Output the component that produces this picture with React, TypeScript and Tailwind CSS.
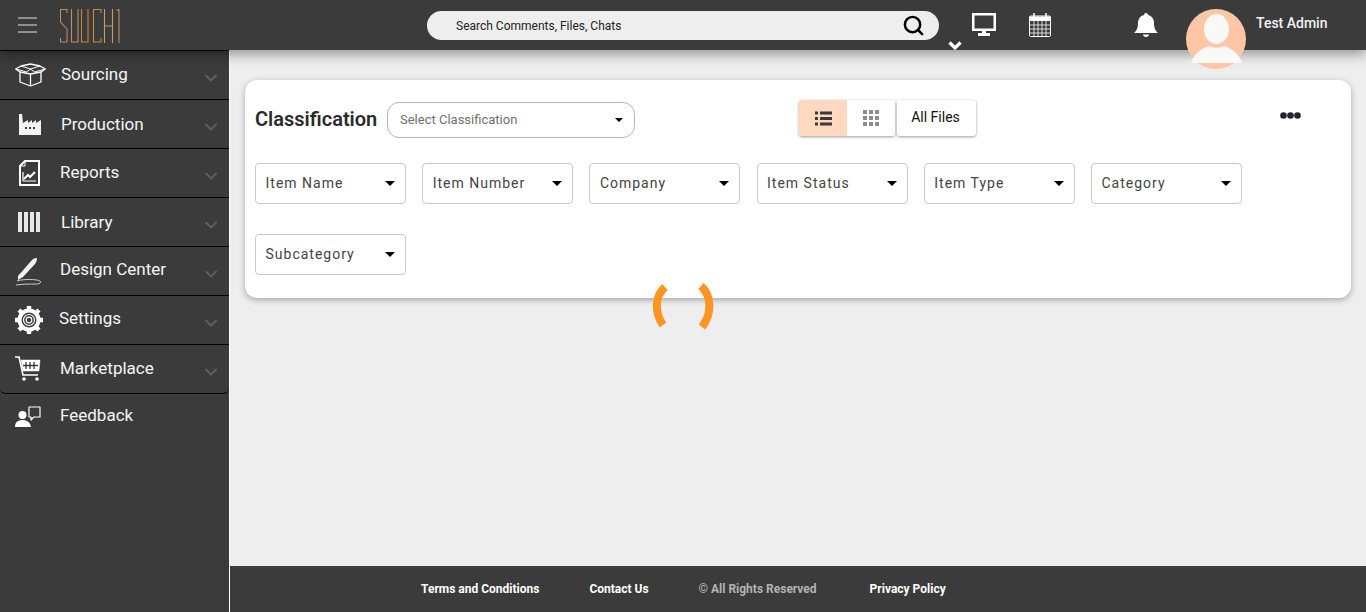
import { FC, ReactNode } from "react";
import { ChevronDown, Search } from "lucide-react";

type TNavItem = {
  label: string;
  icon: ReactNode;
  slot: string;
  text: string;
};

const BoxIcon = () => (
  <svg width="31" height="24" viewBox="0 0 31 24" fill="none" stroke="#fff" strokeWidth="1.3" strokeLinejoin="round">
    <path d="M5 9v10l10.500 4L26 19V9" />
    <path d="M15.500 11v12M5 9l10.500 2L26 9" />
    <path d="M5 9 .7 6 6 3 15.500 1 25 3l5.300 3L26 9" />
    <path d="M.7 6l10.800 3 4-3 4 3 10.800-3M6 3l9.500 3L25 3" strokeWidth="1" />
  </svg>
);

const FactoryIcon = () => (
  <svg width="22" height="21" viewBox="0 0 22 21" fill="#f2f2f2">
    <path d="M0 21V0h3l1 9 5-3v3l4-3v3l4-3v3l5-3v15z" />
    <g fill="#3b3b3b">
      <rect x="6" y="13" width="2" height="2" />
      <rect x="10" y="13" width="2" height="2" />
      <rect x="14" y="13" width="2" height="2" />
    </g>
  </svg>
);

const ReportIcon = () => (
  <svg width="21" height="26" viewBox="0 0 21 26" fill="none" stroke="#fff">
    <path d="M6 1h14v24H1V6z" strokeWidth="2" />
    <path d="M6 1v5H1" strokeWidth="1" />
    <path d="M4 21h13M4 21V12" strokeWidth="1.2" />
    <path d="M5 19l4-4 2 2 5-5" strokeWidth="2" />
  </svg>
);

const BarsIcon = () => (
  <svg width="22" height="20" viewBox="0 0 22 20" fill="#e8e8e8">
    <rect x="0" y="0" width="4" height="20" />
    <rect x="6" y="0" width="4" height="20" />
    <rect x="12" y="0" width="4" height="20" />
    <rect x="18" y="0" width="4" height="20" />
  </svg>
);

const PenIcon = () => (
  <svg width="27" height="29" viewBox="0 0 27 29" fill="none">
    <path d="M3 19 17 3c2-2 5-3 5-1 0 2-1 3-2 5L8 20l-5 3z" fill="#f2f2f2" />
    <path d="M2 24c5-2 20-2 23 0 2 2-1 3-4 3-6 0-14 0-20 1" stroke="#ddd" strokeWidth="0.9" />
  </svg>
);

const GearIcon = () => (
  <svg width="28" height="28" viewBox="0 0 28 28">
    <circle cx="14" cy="14" r="11.500" fill="#fff" />
    <g stroke="#fff" strokeWidth="4.400">
      <path d="M14 0v28M0 14h28M4 4l20 20M24 4 4 24" />
    </g>
    <circle cx="14" cy="14" r="7.500" fill="#3b3b3b" />
    <circle cx="14" cy="14" r="5.500" fill="none" stroke="#fff" strokeWidth="1.200" />
    <circle cx="14" cy="14" r="2.800" fill="none" stroke="#fff" strokeWidth="1.200" />
  </svg>
);

const CartIcon = () => (
  <svg width="26" height="26" viewBox="0 0 26 26" fill="none" stroke="#fff">
    <path d="M0 1h4l4 18h15" strokeWidth="1.6" />
    <path d="M6 4h19l-1 11H8z" fill="#fff" strokeWidth="0.5" />
    <path d="M11 6v7M15 6v7M19 6v7M8 9.500h15" stroke="#3b3b3b" strokeWidth="1.3" />
    <circle cx="9" cy="23" r="1.800" fill="#fff" strokeWidth="0" />
    <circle cx="22" cy="23" r="1.800" fill="#fff" strokeWidth="0" />
  </svg>
);

const FeedbackIcon = () => (
  <svg width="26" height="21" viewBox="0 0 26 21">
    <circle cx="7.500" cy="9" r="4" fill="#fff" />
    <path d="M0 21c0-5 3-7 7.500-7S15 16 16 21z" fill="#fff" />
    <path d="M14 1h11v10h-6l-3 3v-3h-2z" fill="none" stroke="#fff" strokeWidth="1.2" strokeLinejoin="round" />
  </svg>
);

const navItems: TNavItem[] = [
  { label: "Sourcing", icon: <BoxIcon />, slot: "pl-[15px]", text: "ml-[2px] -mt-[1px]" },
  { label: "Production", icon: <FactoryIcon />, slot: "pl-[19px]", text: "ml-[2px] mt-[1px]" },
  { label: "Reports", icon: <ReportIcon />, slot: "pl-[19px]", text: "ml-[1px]" },
  { label: "Library", icon: <BarsIcon />, slot: "pl-[18px]", text: "ml-[2px] mt-[1px]" },
  { label: "Design Center", icon: <PenIcon />, slot: "pl-[15px]", text: "ml-[1px] -mt-[2px]" },
  { label: "Settings", icon: <GearIcon />, slot: "pl-[15px]", text: "-mt-[2px]" },
  { label: "Marketplace", icon: <CartIcon />, slot: "pl-[15px]", text: "ml-[1px] -mt-[1px]" },
];

const filters: string[] = [
  "Item Name",
  "Item Number",
  "Company",
  "Item Status",
  "Item Type",
  "Category",
  "Subcategory",
];

const Caret = () => (
  <span className="h-0 w-0 border-x-[5px] border-t-[5px] border-x-transparent border-t-black" />
);

const Header: FC = () => (
  <header className="relative z-20 flex h-[50px] items-center bg-[#3b3b3b] shadow-[0_4px_12px_rgba(0,0,0,0.4)]">
    <div className="ml-[18px] flex w-[19px] flex-col gap-[5px]">
      <span className="h-[2px] bg-[#8f8f8f]" />
      <span className="h-[2px] bg-[#8f8f8f]" />
      <span className="h-[2px] bg-[#8f8f8f]" />
    </div>
    {/* logo */}
    <svg className="ml-[23px] mt-[1px]" width="60" height="34" viewBox="0 0 60 34" fill="none" stroke="#c4873f" strokeWidth="1.1">
      <path d="M7 4V.5H.5V13L7 20v13H.5v-4" stroke="#b98d60" />
      <path d="M11.500 0v33H18V0" stroke="#bb9062" />
      <path d="M21.500 0v33H28V0" />
      <path d="M41 4V.5h-7.500v32.500H41v-4" />
      <path d="M44.500 0v34M52.500 0v34M44.500 17h8" stroke="#c99a63" />
      <path d="M56.500 1.500 59 .5V34" stroke="#b98d60" />
    </svg>
    <div className="ml-[307px] flex h-[29px] w-[512px] items-center rounded-full bg-[#eeeeee] pl-[29px] pr-[14px]">
      <span className="mt-[1px] flex-1 text-[12px] text-[#222]">Search Comments, Files, Chats</span>
      <Search className="size-[23px] text-black" strokeWidth={2.6} />
    </div>
    <div className="relative ml-[33px] h-[24px] w-[24px]">
      <svg width="24" height="24" viewBox="0 0 24 24" fill="#fff">
        <path d="M0 0h24v18H14v2h4v3H6v-3h4v-2H0zm2.500 2.500v13h19v-13z" fillRule="evenodd" />
      </svg>
      <svg className="absolute -left-[24px] top-[28px]" width="14" height="10" viewBox="0 0 14 10" fill="none" stroke="#fff" strokeWidth="3.200">
        <path d="M1.500 1.500 7 7l5.500-5.500" />
      </svg>
    </div>
    <svg className="ml-[33px]" width="22" height="24" viewBox="0 0 22 24" fill="none" stroke="#fff">
      <rect x="0.500" y="3" width="21" height="20.500" rx="1" strokeWidth="1" />
      <path d="M0 3.500h22V8H0z" fill="#fff" strokeWidth="0" />
      <path d="M5 0v5M17 0v5" strokeWidth="1.500" />
      <path d="M0.500 12h21M0.500 16h21M0.500 20h21M5 8v15M9 8v15M13 8v15M17 8v15" strokeWidth="0.800" />
    </svg>
    <svg className="ml-[83px]" width="24" height="24" viewBox="0 0 24 24" fill="#fff">
      <path d="M12 0c1.500 0 2 1 2 2 4 1 6 4 6 8 0 5 1 7 4 10H0c3-3 4-5 4-10 0-4 2-7 6-8 0-1 .5-2 2-2z" />
      <path d="M9 21.500h6c0 1.500-1.500 2.500-3 2.500s-3-1-3-2.500z" />
    </svg>
    <svg className="absolute left-[1186px] top-[9px]" width="60" height="60" viewBox="0 0 60 60">
      <circle cx="30" cy="30" r="30" fill="#fdc6a5" />
      <ellipse cx="30.500" cy="20" rx="12.500" ry="15" fill="#fbf9f7" />
      <path d="M5 54c2-8 10-15 18-17 4 2 11 2 15 0 8 2 16 9 18 17z" fill="#fbf9f7" />
    </svg>
    <span className="ml-[98px] -mt-[4px] text-[14px] font-medium text-[#f2f2f2]">Test Admin</span>
  </header>
);

const Sidebar: FC = () => (
  <aside className="w-[229px] shrink-0 bg-[#3b3b3b] text-[#f5f5f5]">
    {navItems.map((item, index) => (
      <div
        key={item.label}
        className={`flex items-center border-t border-black pr-[8px] ${
          index === navItems.length - 1 ? "h-[50px] rounded-b-md border-b" : "h-[49px]"
        }`}
      >
        <div className={`flex w-[59px] shrink-0 items-center ${item.slot}`}>{item.icon}</div>
        <span className={`flex-1 text-[17px] ${item.text}`}>{item.label}</span>
        <ChevronDown className="mt-[5px] size-[20px] text-[#5e5e5e]" strokeWidth={2.4} />
      </div>
    ))}
    <div className="flex h-[44px] items-center">
      <div className="flex w-[59px] shrink-0 items-center pl-[15px]">
        <FeedbackIcon />
      </div>
      <span className="-mt-[1px] ml-[1px] text-[17px]">Feedback</span>
    </div>
  </aside>
);

const ClassificationCard: FC = () => (
  <section className="rounded-xl bg-white pb-[23px] pl-[10px] pt-[20px] shadow-[0_2px_6px_rgba(0,0,0,0.3)]">
    <div className="flex h-[38px] items-center">
      <h2 className="w-[132px] text-[20px] font-semibold text-[#2b2b2b]">Classification</h2>
      <div className="mt-[2px] flex h-[36px] w-[248px] items-center justify-between rounded-xl border border-[#b5b5b5] pl-[12px] pr-[11px]">
        <span className="text-[13px] text-[#6f6f6f]">Select Classification</span>
        <span className="h-0 w-0 border-x-[4px] border-t-[4px] border-x-transparent border-t-black" />
      </div>
      <div className="ml-[164px] -mt-[2px] flex h-[36px] rounded-[3px] shadow-[0_1px_3px_rgba(0,0,0,0.4)]">
        <div className="flex w-[48px] items-center justify-center rounded-l-[3px] bg-[#ffd9bf]">
          <svg width="17" height="15" viewBox="0 0 17 15" fill="#3b3b3b">
            <rect x="0" y="0.500" width="3" height="3" />
            <rect x="5" y="0.500" width="12" height="3" />
            <rect x="0" y="6" width="3" height="3" />
            <rect x="5" y="6" width="12" height="3" />
            <rect x="0" y="11.500" width="3" height="3" />
            <rect x="5" y="11.500" width="12" height="3" />
          </svg>
        </div>
        <div className="flex w-[48px] items-center justify-center rounded-r-[3px] bg-white">
          <svg width="16" height="16" viewBox="0 0 16 16" fill="#8c8c8c">
            <rect x="0" y="0" width="4" height="4" />
            <rect x="6" y="0" width="4" height="4" />
            <rect x="12" y="0" width="4" height="4" />
            <rect x="0" y="6" width="4" height="4" />
            <rect x="6" y="6" width="4" height="4" />
            <rect x="12" y="6" width="4" height="4" />
            <rect x="0" y="12" width="4" height="4" />
            <rect x="6" y="12" width="4" height="4" />
            <rect x="12" y="12" width="4" height="4" />
          </svg>
        </div>
      </div>
      <div className="ml-[2px] -mt-[2px] flex h-[36px] w-[79px] items-center justify-center rounded-[3px] bg-white pb-[2px] pr-[2px] text-[14px] text-[#111] shadow-[0_1px_3px_rgba(0,0,0,0.4)]">
        All Files
      </div>
      <svg className="ml-[304px] -mt-[7px]" width="21" height="9" viewBox="0 0 21 9" fill="#22252e">
        <circle cx="3.500" cy="4.500" r="3.300" />
        <circle cx="10.500" cy="4.500" r="3.300" />
        <circle cx="17.500" cy="4.500" r="3.300" />
      </svg>
    </div>
    <div className="mt-[25px] flex flex-wrap gap-x-[16.200px] gap-y-[30px]">
      {filters.map((filter) => (
        <div
          key={filter}
          className="flex h-[41px] w-[151px] items-center justify-between rounded-[4px] border border-[#c9c9c9] pl-[9.500px] pr-[10px]"
        >
          <span className="text-[14px] tracking-[1px] text-[#444]">{filter}</span>
          <Caret />
        </div>
      ))}
    </div>
  </section>
);

const Footer: FC = () => (
  <footer className="flex h-[46px] items-center bg-[#3b3b3b] pl-[191px] text-[12px] font-bold">
    <span className="text-white">Terms and Conditions</span>
    <span className="ml-[50px] text-white">Contact Us</span>
    <span className="ml-[50px] text-[#b3b3b3]">© All Rights Reserved</span>
    <span className="ml-[53px] text-white">Privacy Policy</span>
  </footer>
);

const App: FC = () => (
  <div className="flex h-[612px] w-[1366px] flex-col overflow-hidden bg-[#eeeeee] font-['Roboto',sans-serif]">
    <Header />
    <div className="flex min-h-0 flex-1">
      <Sidebar />
      <div className="relative flex flex-1 flex-col border-l border-white">
        <main className="flex-1 pl-[15px] pr-[15px] pt-[30px]">
          <ClassificationCard />
        </main>
        <Footer />
        {/* loading spinner */}
        <svg className="absolute left-[422px] top-[233px]" width="64" height="48" viewBox="0 0 64 48" fill="none" stroke="#ff9420" strokeWidth="8">
          <path d="M13 4C3 13 2 29 11 42" />
          <path d="M49 3c11 10 11 28 1 41" />
        </svg>
      </div>
    </div>
  </div>
);

export default App;
